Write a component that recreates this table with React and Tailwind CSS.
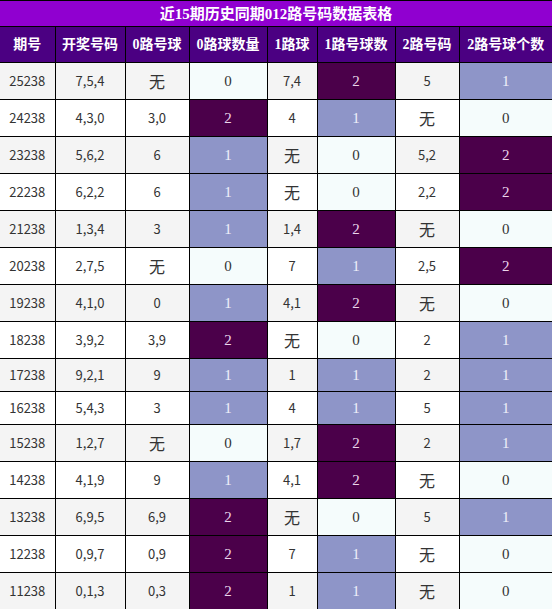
import React from 'react';

const rows = [
  ['25238', '7,5,4', '无', 0, '7,4', 2, '5', 1],
  ['24238', '4,3,0', '3,0', 2, '4', 1, '无', 0],
  ['23238', '5,6,2', '6', 1, '无', 0, '5,2', 2],
  ['22238', '6,2,2', '6', 1, '无', 0, '2,2', 2],
  ['21238', '1,3,4', '3', 1, '1,4', 2, '无', 0],
  ['20238', '2,7,5', '无', 0, '7', 1, '2,5', 2],
  ['19238', '4,1,0', '0', 1, '4,1', 2, '无', 0],
  ['18238', '3,9,2', '3,9', 2, '无', 0, '2', 1],
  ['17238', '9,2,1', '9', 1, '1', 1, '2', 1],
  ['16238', '5,4,3', '3', 1, '4', 1, '5', 1],
  ['15238', '1,2,7', '无', 0, '1,7', 2, '2', 1],
  ['14238', '4,1,9', '9', 1, '4,1', 2, '无', 0],
  ['13238', '6,9,5', '6,9', 2, '无', 0, '5', 1],
  ['12238', '0,9,7', '0,9', 2, '7', 1, '无', 0],
  ['11238', '0,1,3', '0,3', 2, '1', 1, '无', 0],
];

const headers = ['期号', '开奖号码', '0路号球', '0路球数量', '1路球', '1路号球数', '2路号码', '2路号球个数'];
const widths = [55, 70, 64, 78, 50, 78, 64, 93];

const countStyles = {
  0: 'bg-[#f5fcfc] text-[#333]',
  1: 'bg-[#8e95c8] text-[#eef0fa]',
  2: 'bg-[#4b004a] text-[#ecd6ec]',
};

function TextCell({ value }) {
  return (
    <td className="border border-black first:border-l-0 px-0 py-[6px] text-center text-[13px] leading-[20px] text-[#333] font-['Noto_Sans_CJK_SC',sans-serif]">
      {value === '无' ? <span className="text-[16px] leading-[24px]">无</span> : value}
    </td>
  );
}

function CountCell({ value }) {
  return (
    <td
      className={`border border-black last:border-r-0 px-0 py-[6px] text-center text-[15px] leading-[20px] font-['Liberation_Serif',serif] ${countStyles[value]}`}
    >
      {value}
    </td>
  );
}

export default function App() {
  return (
    <div className="w-[552px] bg-white">
      <table className="w-[552px] table-fixed border-collapse">
        <colgroup>
          {widths.map((w, i) => (
            <col key={i} style={{ width: w }} />
          ))}
        </colgroup>
        <thead>
          <tr>
            <th
              colSpan={8}
              className="h-[26px] border border-black border-x-0 bg-[#9000d0] p-0 text-center text-[15px] leading-[24px] font-bold text-white font-['Liberation_Serif','Noto_Sans_CJK_SC',serif]"
            >
              近15期历史同期012路号码数据表格
            </th>
          </tr>
          <tr>
            {headers.map((h) => (
              <th
                key={h}
                className="h-[36px] border border-black first:border-l-0 last:border-r-0 bg-[#4b0082] p-0 text-center text-[14px] leading-[20px] font-bold text-white font-['Liberation_Serif','Noto_Sans_CJK_SC',serif]"
              >
                {h}
              </th>
            ))}
          </tr>
        </thead>
        <tbody>
          {rows.map((r, i) => (
            <tr key={r[0]} className={i % 2 === 0 ? 'bg-[#f4f4f4]' : 'bg-white'}>
              <TextCell value={r[0]} />
              <TextCell value={r[1]} />
              <TextCell value={r[2]} />
              <CountCell value={r[3]} />
              <TextCell value={r[4]} />
              <CountCell value={r[5]} />
              <TextCell value={r[6]} />
              <CountCell value={r[7]} />
            </tr>
          ))}
        </tbody>
      </table>
    </div>
  );
}
